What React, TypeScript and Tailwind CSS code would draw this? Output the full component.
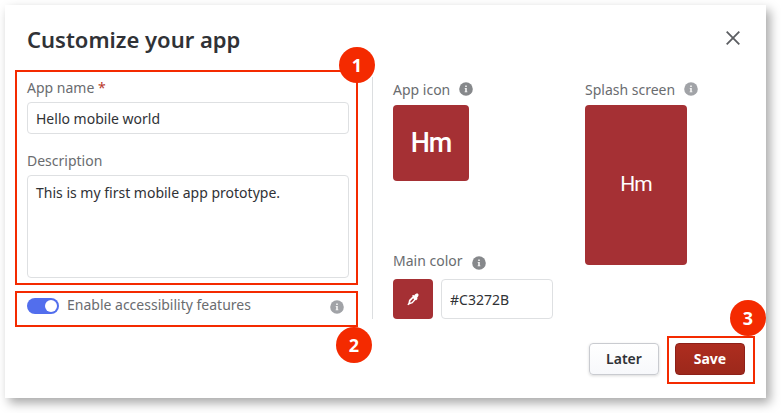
import type { ReactNode } from "react";

function Info({ className = "text-[#86888b]" }: { className?: string }) {
  return (
    <svg viewBox="0 0 14 14" className={`size-[14px] shrink-0 ${className}`} aria-hidden="true">
      <circle cx="7" cy="7" r="6.8" fill="currentColor" />
      <path d="M6.2 3.5h1.6v1.5H6.2zM5.7 5.9h2.1v3.5h.6v.9H5.6v-.9h.6V6.8h-.5z" fill="#f6f6f6" />
    </svg>
  );
}

function Step({ n, className }: { n: number; className: string }) {
  return (
    <span
      className={`absolute flex size-9 items-center justify-center rounded-full bg-[#f42a00] text-[18px] font-bold leading-none text-white ${className}`}
    >
      {n}
    </span>
  );
}

function Label({ children, className = "" }: { children: ReactNode; className?: string }) {
  return <span className={`text-[14px] leading-5 text-[#6a6c6f] ${className}`}>{children}</span>;
}

function DetailsForm() {
  return (
    <div className="w-[343px]">
      <section className="relative flex h-[215px] flex-col border-2 border-[#f42a00] pl-[10px] pr-[7px] pt-[6px]">
        <Label>
          App name <span className="text-[#b93a2a]">*</span>
        </Label>
        <input
          readOnly
          value="Hello mobile world"
          className="mt-1 h-8 w-full rounded-[4px] border border-[#dee0e2] px-2 text-[14px] text-[#303236] outline-none"
        />
        <Label className="mt-[17px]">Description</Label>
        <textarea
          readOnly
          value="This is my first mobile app prototype."
          className="mt-1 h-[103px] w-full resize-none rounded-[4px] border border-[#dee0e2] px-2 py-[7px] text-[14px] leading-5 text-[#303236] outline-none"
        />
        <Step n={1} className="-right-[19px] -top-[25px]" />
      </section>
      <section className="relative mt-[6px] flex h-9 items-start border-2 border-[#f42a00] pl-[10px] pr-3">
        <span className="mt-[5px] flex h-4 w-8 items-center justify-end rounded-full bg-[#526eed] pr-[2px]">
          <span className="size-3 rounded-full bg-white" />
        </span>
        <Label className="ml-2 mt-[2px]">Enable accessibility features</Label>
        <Info className="ml-auto mt-[7px] text-[#a1a3a7]" />
        <Step n={2} className="-right-4 top-[34px]" />
      </section>
    </div>
  );
}

function Appearance() {
  return (
    <div className="mt-[7px] flex h-[242px] border-l border-[#dcdee0] pl-5">
      <div className="flex w-[192px] flex-col pt-[3px]">
        <div className="flex h-5 items-center gap-[9px]">
          <Label>App icon</Label>
          <Info className="-translate-y-px text-[#86888b]" />
        </div>
        <div className="mt-[5px] flex size-[76px] items-center justify-center rounded-[4px] bg-[#a53034] font-[Roboto] text-[27px] font-medium tracking-[-1px] text-white">
          Hm
        </div>
        <div className="mt-[70px] flex h-5 items-center gap-[9px]">
          <Label>Main color</Label>
          <Info className="translate-y-[2px] text-[#86888b]" />
        </div>
        <div className="mt-2 flex gap-2">
          <button className="flex size-10 items-center justify-center rounded-[4px] bg-[#a53034]">
            <svg viewBox="0 0 14 14" className="size-[14px] text-white" aria-hidden="true">
              <path
                d="M6.4 3.4c.6-.7 1.3-.6 1.9 0C9.3 1.8 11.4 1.1 12.2 2s.2 2.6-1.1 3.7c.5.6.4 1.3-.2 1.9l-.7.7-.7-.3-2.9 3.3-2.9.9-1.5 1-.8-.8 1-1.5.6-2.9 3.6-3.6-.5-.7z"
                fill="currentColor"
              />
              <path d="M7.2 6.3 4.5 9.1l-.4 1.5 1.5-.4 2.5-2.8z" fill="#a53034" />
            </svg>
          </button>
          <input
            readOnly
            value="#C3272B"
            className="h-10 w-28 rounded-[4px] border border-[#dee0e2] px-2 text-[14px] text-[#303236] outline-none"
          />
        </div>
      </div>
      <div className="pt-[3px]">
        <div className="flex h-5 items-center gap-[9px]">
          <Label>Splash screen</Label>
          <Info className="-translate-y-px text-[#a1a3a7]" />
        </div>
        <div className="mt-[5px] flex h-40 w-[102px] items-center justify-center rounded-[4px] bg-[#a53034] font-[Roboto] text-[21px] tracking-[-1px] text-white">
          Hm
        </div>
      </div>
    </div>
  );
}

export default function App() {
  return (
    <div className="h-[413px] w-[781px] overflow-hidden bg-white p-[5px] font-['Noto_Sans',sans-serif]">
      <main className="flex h-[393px] w-[761px] flex-col bg-white shadow-[4px_5px_10px_rgba(0,0,0,0.35)]">
        <header className="flex h-[65px] items-start justify-between pl-[22px] pr-[26px]">
          <h1 className="mt-[19px] text-[22px] font-semibold leading-[30px] text-[#303236]">Customize your app</h1>
          <button aria-label="Close" className="mt-[26px]">
            <svg viewBox="0 0 14 14" className="size-[14px] text-[#5c5e62]" aria-hidden="true">
              <path d="m.7.7 12.6 12.6m0-12.6L.7 13.3" stroke="currentColor" strokeWidth="1.8" />
            </svg>
          </button>
        </header>
        <div className="flex gap-[14px] pl-[10px]">
          <DetailsForm />
          <Appearance />
        </div>
        <footer className="mt-[9px] flex items-start justify-end gap-2 pr-[11px]">
          <button className="mt-[7px] h-8 w-[70px] rounded-[4px] border border-[#c9cbd0] bg-linear-to-b from-white to-[#f7f8fb] pb-px text-[14px] font-semibold text-[#303236] shadow-[0_1px_3px_rgba(0,0,0,0.15)]">
            Later
          </button>
          <div className="relative h-12 w-[88px] border-2 border-[#f42a00] pl-[6px] pt-[5px]">
            <button className="block h-8 w-[70px] rounded-[4px] border border-[#8e2018] bg-linear-to-b from-[#ae2d1f] to-[#9c281b] pb-px text-[14px] font-bold text-white">
              Save
            </button>
            <Step n={3} className="-right-[13px] -top-[38px]" />
          </div>
        </footer>
      </main>
    </div>
  );
}
